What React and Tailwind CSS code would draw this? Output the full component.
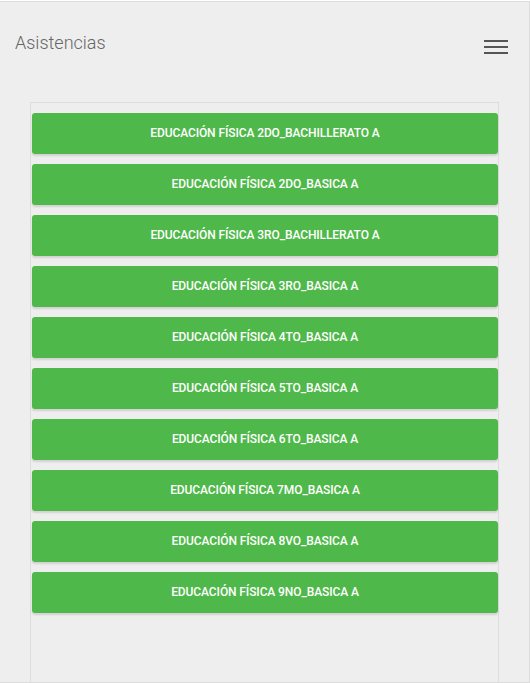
const courses = [
  'EDUCACIÓN FÍSICA 2DO_BACHILLERATO A',
  'EDUCACIÓN FÍSICA 2DO_BASICA A',
  'EDUCACIÓN FÍSICA 3RO_BACHILLERATO A',
  'EDUCACIÓN FÍSICA 3RO_BASICA A',
  'EDUCACIÓN FÍSICA 4TO_BASICA A',
  'EDUCACIÓN FÍSICA 5TO_BASICA A',
  'EDUCACIÓN FÍSICA 6TO_BASICA A',
  'EDUCACIÓN FÍSICA 7MO_BASICA A',
  'EDUCACIÓN FÍSICA 8VO_BASICA A',
  'EDUCACIÓN FÍSICA 9NO_BASICA A',
];

export default function App() {
  return (
    <div className="h-[682px] w-[530px] overflow-hidden bg-[#eeeeee] border-t border-r border-b border-[#dcdcdc] mt-px" style={{ fontFamily: 'Roboto, "Liberation Sans", sans-serif' }}>
      <div className="flex items-start justify-between pl-[15px] pr-[21px] pt-[29px] h-[100px]">
        <h1 className="text-[18px] font-light text-[#666] leading-[24px]">Asistencias</h1>
        <button className="mt-[9px] flex flex-col gap-[4px] w-[24px]">
          <span className="block h-[2px] w-full bg-[#555]" />
          <span className="block h-[2px] w-full bg-[#555]" />
          <span className="block h-[2px] w-full bg-[#555]" />
        </button>
      </div>

      <div className="ml-[30px] w-[469px] h-[600px] border border-[#dddddd] pt-[10px] pl-px flex flex-col gap-[10px]">
        {courses.map((c) => (
          <button
            key={c}
            className="h-[41px] w-[466px] pb-[2px] rounded-[3px] bg-[#4fb84a] text-white text-[12px] tracking-[-0.1px] font-medium uppercase shadow-[0_2px_2px_rgba(0,0,0,0.12)] flex items-center justify-center"
          >
            {c}
          </button>
        ))}
      </div>
    </div>
  );
}
